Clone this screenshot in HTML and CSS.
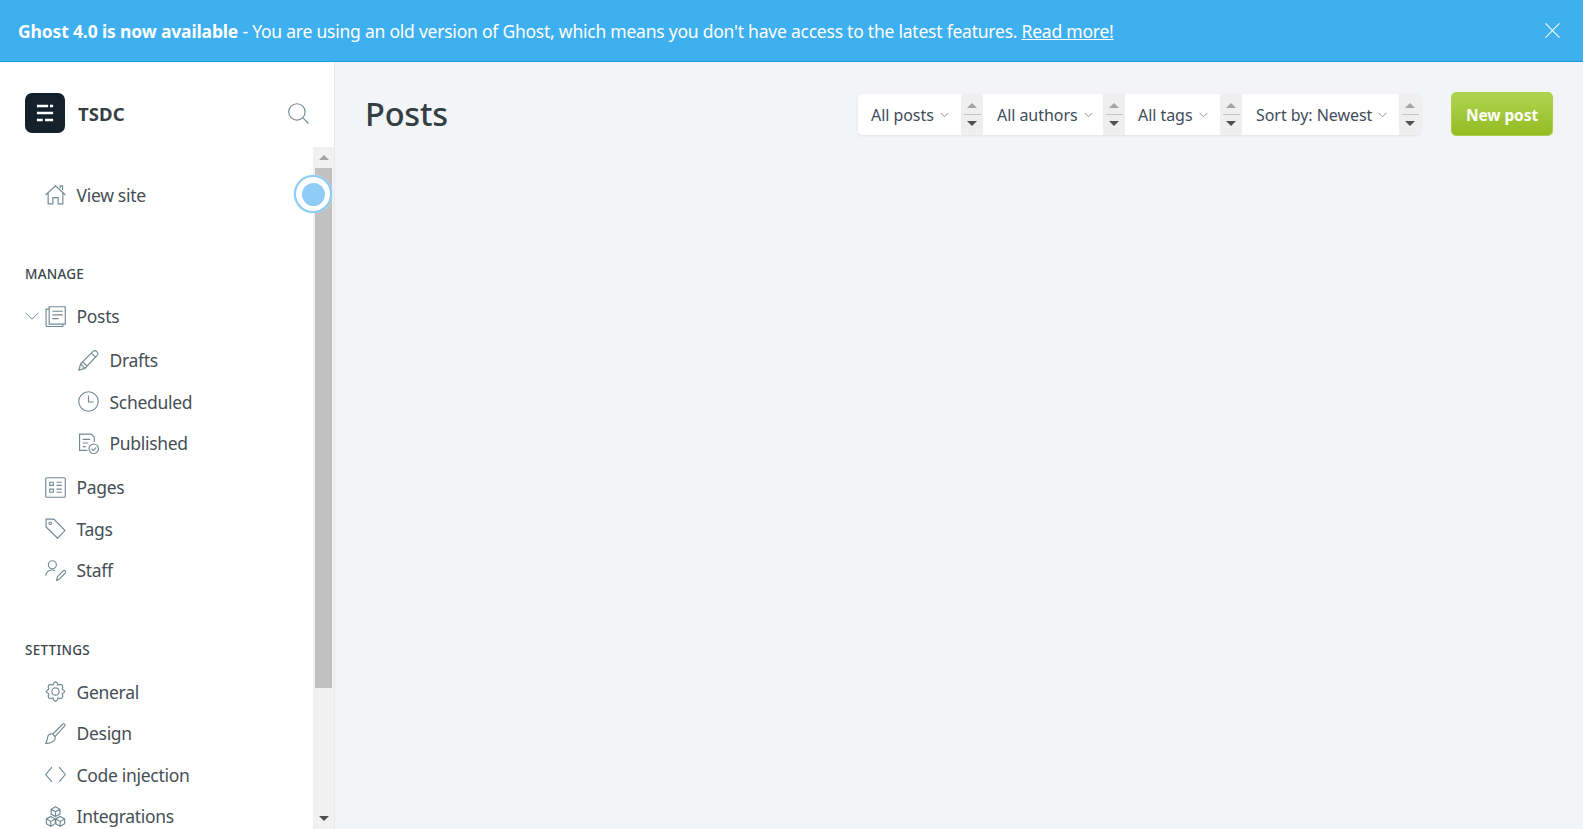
FILE: index.html
```html
<!DOCTYPE html>
<html lang="en">
<head>
<meta charset="utf-8">
<title>Posts - TSDC</title>
<link rel="stylesheet" href="styles.css">
</head>
<body>
<div class="banner">
  <p class="banner-text"><strong>Ghost 4.0 is now available</strong> - You are using an old version of Ghost, which means you don't have access to the latest features. <a href="#">Read more!</a></p>
  <svg class="banner-close" viewBox="0 0 16 16"><path d="M.5.5l15 15M15.5.5l-15 15"/></svg>
</div>
<div class="app">
  <aside class="sidebar">
    <header class="brand">
      <div class="logo"><svg viewBox="0 0 20 20"><path d="M1 2.200h12.500M15.500 2.200H19M1 10h18M1 17.800h6.500M10 17.800h9"/></svg></div>
      <span class="brand-name">TSDC</span>
      <svg class="search" viewBox="0 0 20 20"><circle cx="8.500" cy="8.500" r="7.800"/><path d="M14.200 14.200l5.300 5.300"/></svg>
    </header>
    <div class="scroll">
      <nav class="nav">
        <a class="row"><svg class="ico" viewBox="0 0 20 20"><path d="M.6 10.500L10 1.800l9.400 8.700M3 8.500v10.500h4.500v-6h5v6H17V8.500M14.500 4V1.800h2.200v4.200"/></svg>View site</a>
        <h3 class="group first">MANAGE</h3>
        <a class="row"><svg class="caret" viewBox="0 0 14 8"><path d="M.5.8L7 7.200 13.500.8"/></svg><svg class="ico" viewBox="0 0 20 20"><path d="M4 .7h15.300v16.500H4zM7 5h10M7 8.500h10M7 12h6M4 3H1v15c0 1 .8 1.500 1.500 1.500H17v-2.300"/></svg>Posts</a>
        <div class="sub">
          <a class="row"><svg class="ico" viewBox="0 0 20 20"><path d="M.8 19.200l1.700-6L14.800.9c1-.6 2-.4 3 .6s1.500 2.300.8 3.200L6.500 17.500zM2.500 13.200l4 4.300M12.800 3l4.400 4.300M4.500 11.300l4.300 4.200"/></svg>Drafts</a>
          <a class="row"><svg class="ico" viewBox="0 0 20 20"><circle cx="10" cy="10" r="9.300"/><path d="M10 4.500V10.500h5"/></svg>Scheduled</a>
          <a class="row"><svg class="ico" viewBox="0 0 20 20"><path d="M9 16.500H1.500V1h11l3 3v4.500M4.500 6h7M4.500 9.500h5M4.500 13h3"/><circle cx="15" cy="15" r="4.500"/><path d="M12.800 15l1.700 1.700 2.800-3"/></svg>Published</a>
        </div>
        <a class="row"><svg class="ico" viewBox="0 0 20 20"><rect x=".7" y=".7" width="18.600" height="18.600" rx="1"/><path d="M4.500 5h3.500v3H4.500zM4.500 11.500h3.500v3H4.500zM11 5h5M11 8h5M11 11.500h5M11 14.500h5"/></svg>Pages</a>
        <a class="row"><svg class="ico" viewBox="0 0 20 20"><path d="M1 1h7.500l10.500 11-7 7.300L1 8.500z"/><circle cx="5" cy="5" r="1.200"/></svg>Tags</a>
        <a class="row"><svg class="ico" viewBox="0 0 20 20"><circle cx="7" cy="4.500" r="3.800"/><path d="M.7 15c0-3 2.500-5.500 6-5.500 1.300 0 2.200.3 3 .8M11 19.500l1-3.800 5.500-5.500c1-.8 2.800 1 2 2L14 17.800z"/></svg>Staff</a>
        <h3 class="group">SETTINGS</h3>
        <a class="row"><svg class="ico" viewBox="0 0 20 20"><circle cx="10" cy="10" r="3.500"/><path d="M8.300 1.800L10 .7l1.700 1.100.6 2 2-.6 2 .5.700 2-.7 1.900 1.700 1.300.8 1.100-.8 1.100-1.700 1.300.7 1.900-.7 2-2 .5-2-.6-.6 2-1.700 1.100-1.700-1.100-.6-2-2 .6-2-.5-.7-2 .7-1.900-1.700-1.300L1.200 10.100 2 9l1.700-1.300L3 5.800l.7-2 2-.5 2 .6z"/></svg>General</a>
        <a class="row"><svg class="ico" viewBox="0 0 20 20"><path d="M7.500 10.500L17 1c1-.8 2.600.6 1.800 1.800L9.500 13M7.500 10.500c-3-.8-4.700 1-5 3.200-.2 1.800-.6 3.600-1.800 5.600 2.500.2 5.500-.4 7.300-2 1.500-1.300 2-3 1.500-4.300z"/></svg>Design</a>
        <a class="row"><svg class="ico" viewBox="0 0 20 20"><path d="M6.500 3L.7 10l5.800 7M13.500 3l5.800 7-5.800 7"/></svg>Code injection</a>
        <a class="row"><svg class="ico" viewBox="0 0 20 20"><path d="M10 .7l4.200 2.400v4.600L10 10 5.800 7.700V3.100zM5.800 3.100L10 5.500l4.200-2.400M10 5.500V10M5.500 10L9.700 12.300v4.600L5.500 19.300 1.300 16.900v-4.600zM1.300 12.300l4.200 2.400 4.200-2.400M5.500 14.700v4.600M14.500 10l4.200 2.300v4.600l-4.200 2.400-4.200-2.400v-4.600zM10.300 12.300l4.200 2.400 4.200-2.400M14.500 14.700v4.600"/></svg>Integrations</a>
      </nav>
      <div class="scrollbar">
        <button class="sb-btn"><span class="tri-up"></span></button>
        <div class="sb-track"><div class="sb-thumb"></div></div>
        <button class="sb-btn"><span class="tri-down"></span></button>
      </div>
      <div class="pulse"><span></span></div>
    </div>
  </aside>
  <main class="main">
    <h1 class="title">Posts</h1>
    <div class="filters">
      <div class="select w1"><span>All posts</span><svg class="chev" viewBox="0 0 10 6"><path d="M.7.7L5 5l4.300-4.300"/></svg></div>
      <div class="spin"><i class="up"></i><b></b><i class="down"></i></div>
      <div class="select w2"><span>All authors</span><svg class="chev" viewBox="0 0 10 6"><path d="M.7.7L5 5l4.300-4.300"/></svg></div>
      <div class="spin"><i class="up"></i><b></b><i class="down"></i></div>
      <div class="select w3"><span>All tags</span><svg class="chev" viewBox="0 0 10 6"><path d="M.7.7L5 5l4.300-4.300"/></svg></div>
      <div class="spin"><i class="up"></i><b></b><i class="down"></i></div>
      <div class="select w4"><span>Sort by: Newest</span><svg class="chev" viewBox="0 0 10 6"><path d="M.7.7L5 5l4.300-4.300"/></svg></div>
      <div class="spin"><i class="up"></i><b></b><i class="down"></i></div>
    </div>
    <button class="new-post">New post</button>
  </main>
</div>
</body>
</html>
```
FILE: styles.css
```css
* { box-sizing: border-box; }
html, body { margin: 0; height: 100%; overflow: hidden; }
body { font-family: "Noto Sans", "Open Sans", sans-serif; color: #3e4850; background: #f2f4f8; display: flex; flex-direction: column; }

.banner { height: 62px; flex: none; background: #3eb0ef; border-bottom: 1px solid #1f9be0; color: #fff; display: flex; align-items: center; padding: 0 23px 0 18px; justify-content: space-between; }
.banner-text { margin: 0; font-size: 17.5px; letter-spacing: -.23px; }
.banner-text strong { font-weight: 700; letter-spacing: -.15px; }
.banner-text a { color: #fff; text-decoration: underline; }
.banner-close { width: 15px; height: 15px; fill: none; stroke: #fff; stroke-width: 1.1; }

.app { flex: 1; display: flex; min-height: 0; }
.sidebar { width: 335px; flex: none; background: #fff; border-right: 1px solid #e6e9ee; display: flex; flex-direction: column; min-height: 0; }
.brand { height: 85px; flex: none; display: flex; align-items: center; padding: 17px 25px 0; }
.logo { width: 40px; height: 40px; border-radius: 7px; background: #15212a; display: flex; align-items: center; justify-content: center; }
.logo svg { width: 18px; height: 18px; fill: none; stroke: #fff; stroke-width: 2.800; }
.brand-name { font-size: 18.500px; font-weight: 700; margin-left: 13px; flex: 1; letter-spacing: .1px; color: #343f44; }
.search { width: 21px; height: 21px; fill: none; stroke: #738a94; stroke-width: 1.1; }

.scroll { flex: 1; position: relative; display: flex; min-height: 0; overflow: hidden; }
.nav { flex: 1; padding: 27px 0 0 25px; overflow: hidden; min-width: 0; }
.row { position: relative; display: flex; align-items: center; height: 41.500px; padding-left: 20px; font-size: 17.5px; letter-spacing: -.3px; color: #464f56; white-space: nowrap; }
.ico { width: 21px; height: 21px; flex: none; margin-right: 10.500px; fill: none; stroke: #738a94; stroke-width: 1.1; }
.caret { position: absolute; left: 0; top: 16px; width: 14px; height: 8px; fill: none; stroke: #738a94; stroke-width: 1; }
.group { margin: 0; font-size: 13.500px; font-weight: 500; letter-spacing: .25px; color: #3a464d; line-height: 18px; padding-top: 50px; padding-bottom: 12px; }
.group.first { padding-top: 49px; padding-bottom: 13px; }
.sub { padding: 2.500px 0 2.500px 33px; }
.sub .row { padding-left: 20px; }

.scrollbar { width: 21px; flex: none; background: #f1f1f1; display: flex; flex-direction: column; }
.sb-btn { height: 21px; padding: 0; border: 0; background: transparent; display: flex; align-items: center; justify-content: center; flex: none; }
.tri-up { border: 5px solid transparent; border-top: 0; border-bottom-color: #a3a3a3; }
.tri-down { border: 5px solid transparent; border-bottom: 0; border-top-color: #505050; }
.sb-track { flex: 1; padding: 0 2px; }
.sb-thumb { height: 520px; background: #c1c1c1; }

.pulse { position: absolute; left: 294px; top: 28px; width: 38px; height: 38px; border-radius: 50%; border: 2px solid #8ccdf3; background: #fff; display: flex; align-items: center; justify-content: center; box-shadow: 0 0 2px #bfe3f8; }
.pulse span { width: 23px; height: 23px; border-radius: 50%; background: #90cdf6; }

.main { flex: 1; display: flex; align-items: flex-start; padding: 30px 30px 0 30px; min-width: 0; }
.title { margin: 0; font-size: 32.500px; font-weight: 500; line-height: 44px; letter-spacing: -.2px; color: #343f44; flex: 1; }
.filters { display: flex; height: 41px; margin-top: 2px; border-radius: 5px; box-shadow: 0 1px 3px rgba(0,0,0,.08); overflow: hidden; }
.select { background: #fff; display: flex; align-items: center; padding-left: 13px; font-size: 16px; letter-spacing: -.05px; white-space: nowrap; color: #3f4c5a; }
.w1 { width: 103px; } .w2 { width: 120px; padding-left: 14px; } .w3 { width: 95px; } .w4 { width: 157px; padding-left: 14px; }
.chev { width: 9px; height: 6px; margin-left: 6px; fill: none; stroke: #8f989f; stroke-width: 1.1; }
.spin { width: 22px; background: #efefef; display: flex; flex-direction: column; align-items: center; justify-content: center; }
.spin b { width: 17px; height: 1px; background: #c4c4c4; margin: 6px 0; }
.spin .up { border: 5px solid transparent; border-top: 0; border-bottom-color: #a3a3a3; }
.spin .down { border: 5px solid transparent; border-bottom: 0; border-top-color: #505050; }
.new-post { width: 102px; height: 44px; margin-left: 30px; padding: 1px 0 0; border: 1px solid #a9d24c; border-radius: 5px; background: linear-gradient(#afd550, #94bc23); color: #fff; font: 700 15.500px "Noto Sans", sans-serif; letter-spacing: -.1px; }
```
